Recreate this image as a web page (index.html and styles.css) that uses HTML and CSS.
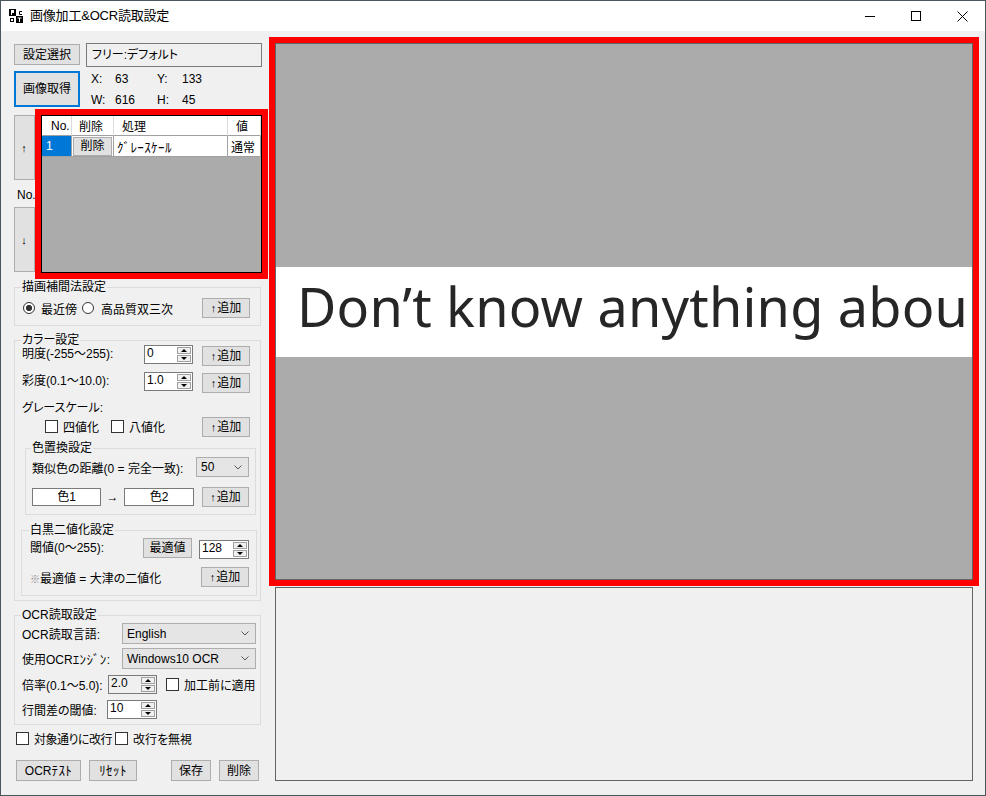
FILE: index.html
```html
<!DOCTYPE html>
<html lang="ja">
<head>
<meta charset="utf-8">
<title>画像加工&amp;OCR読取設定</title>
<link rel="stylesheet" href="styles.css">
</head>
<body>
<div class="window">
  <header class="titlebar">
    <svg class="app-icon" width="16" height="16" viewBox="0 0 16 16">
      <rect x="1" y="1" width="7" height="7" fill="#000"/>
      <rect x="3" y="2" width="3" height="3" fill="#fff"/>
      <rect x="3" y="5" width="1" height="2" fill="#fff"/>
      <path d="M14 3.5H11.5V6.5H14" fill="none" stroke="#000"/>
      <rect x="2.5" y="10.5" width="3" height="3" fill="none" stroke="#000"/>
      <rect x="8" y="8" width="7" height="7" fill="#000"/>
      <rect x="9.5" y="9.5" width="4" height="1" fill="#fff"/>
      <rect x="11" y="10" width="1" height="4" fill="#fff"/>
    </svg>
    <span class="title">画像加工&amp;OCR読取設定</span>
    <div class="caption">
      <span class="cap-btn"><svg width="10" height="10" viewBox="0 0 10 10"><path d="M0 5.5H10" stroke="#000"/></svg></span>
      <span class="cap-btn"><svg width="10" height="10" viewBox="0 0 10 10"><rect x="0.5" y="0.5" width="9" height="9" fill="none" stroke="#000"/></svg></span>
      <span class="cap-btn"><svg width="11" height="11" viewBox="0 0 11 11"><path d="M0.5 0.5L10.5 10.5M10.5 0.5L0.5 10.5" stroke="#000"/></svg></span>
    </div>
  </header>

  <main class="client">
    <section class="left">
      <div class="row-a">
        <button type="button" class="btn btn-select">設定選択</button>
        <div class="textbox ro-box">フリー:デフォルト</div>
      </div>

      <div class="row-b">
        <button type="button" class="btn btn-capture">画像取得</button>
        <div class="coords">
          <span>X:</span><span>63</span><span>Y:</span><span>133</span>
          <span>W:</span><span>616</span><span>H:</span><span>45</span>
        </div>
      </div>

      <div class="row-c">
        <div class="mover">
          <button type="button" class="btn btn-move"><span class="arr">↑</span></button>
          <span class="no-label">No.</span>
          <button type="button" class="btn btn-move"><span class="arr">↓</span></button>
        </div>
        <div class="grid">
          <div class="g-row g-head">
            <span class="g-cell c-no">No.</span>
            <span class="g-cell c-del">削除</span>
            <span class="g-cell c-proc">処理</span>
            <span class="g-cell c-val">値</span>
          </div>
          <div class="g-row g-data">
            <span class="g-cell c-no sel">1</span>
            <span class="g-cell c-del"><span class="btn cell-btn">削除</span></span>
            <span class="g-cell c-proc"><span class="hw">ｸﾞﾚｰｽｹｰﾙ</span></span>
            <span class="g-cell c-val">通常</span>
          </div>
        </div>
      </div>

      <fieldset class="group g-interp">
        <legend>描画補間法設定</legend>
        <div class="i-row">
          <span class="radio on"></span><span class="opt1">最近傍</span>
          <span class="radio r2"></span><span class="opt2">高品質双三次</span>
          <button type="button" class="btn btn-add"><span class="arr">↑</span>追加</button>
        </div>
      </fieldset>

      <fieldset class="group g-color">
        <legend>カラー設定</legend>
        <div class="frow">
          <span class="lbl">明度(-255～255):</span>
          <div class="num"><span class="num-val">0</span><span class="spin"><span class="sp"><i class="tri-up"></i></span><span class="sp"><i class="tri-down"></i></span></span></div>
          <button type="button" class="btn btn-add"><span class="arr">↑</span>追加</button>
        </div>
        <div class="frow mt6">
          <span class="lbl">彩度(0.1～10.0):</span>
          <div class="num"><span class="num-val">1.0</span><span class="spin"><span class="sp"><i class="tri-up"></i></span><span class="sp"><i class="tri-down"></i></span></span></div>
          <button type="button" class="btn btn-add"><span class="arr">↑</span>追加</button>
        </div>
        <div class="gs-label">グレースケール:</div>
        <div class="chk-row">
          <span class="chk first"></span><span class="chk-label">四値化</span>
          <span class="chk second"></span><span class="chk-label">八値化</span>
          <button type="button" class="btn btn-add"><span class="arr">↑</span>追加</button>
        </div>

        <fieldset class="group g-replace">
          <legend>色置換設定</legend>
          <div class="r-row1">
            <span>類似色の距離(0 = 完全一致):</span>
            <div class="combo c-dist"><span>50</span><svg class="chev" width="8" height="5" viewBox="0 0 8 5"><path d="M0.5 0.5L4 4L7.5 0.5" fill="none" stroke="#555"/></svg></div>
          </div>
          <div class="r-row2">
            <div class="textbox colorbox c1">色1</div>
            <span class="arrow">→</span>
            <div class="textbox colorbox c2">色2</div>
            <button type="button" class="btn btn-add w47"><span class="arr">↑</span>追加</button>
          </div>
        </fieldset>

        <fieldset class="group g-bw">
          <legend>白黒二値化設定</legend>
          <div class="b-row1">
            <span class="b-lbl">閾値(0～255):</span>
            <button type="button" class="btn btn-opt">最適値</button>
            <div class="num n128"><span class="num-val">128</span><span class="spin"><span class="sp"><i class="tri-up"></i></span><span class="sp"><i class="tri-down"></i></span></span></div>
          </div>
          <div class="b-row2">
            <span><span class="kome">※</span>最適値 = 大津の二値化</span>
            <button type="button" class="btn btn-add"><span class="arr">↑</span>追加</button>
          </div>
        </fieldset>
      </fieldset>

      <fieldset class="group g-ocr">
        <legend>OCR読取設定</legend>
        <div class="o-row o1">
          <span class="o-lbl">OCR読取言語:</span>
          <div class="combo c-wide"><span>English</span><svg class="chev" width="8" height="5" viewBox="0 0 8 5"><path d="M0.5 0.5L4 4L7.5 0.5" fill="none" stroke="#555"/></svg></div>
        </div>
        <div class="o-row o2">
          <span class="o-lbl">使用OCR<span class="hw">ｴﾝｼﾞﾝ</span>:</span>
          <div class="combo c-wide"><span>Windows10 OCR</span><svg class="chev" width="8" height="5" viewBox="0 0 8 5"><path d="M0.5 0.5L4 4L7.5 0.5" fill="none" stroke="#555"/></svg></div>
        </div>
        <div class="o-row o3">
          <span class="o-lbl w86">倍率(0.1～5.0):</span>
          <div class="num n-ro"><span class="num-val">2.0</span><span class="spin"><span class="sp"><i class="tri-up"></i></span><span class="sp"><i class="tri-down"></i></span></span></div>
          <span class="chk ocr-chk"></span><span class="chk-label">加工前に適用</span>
        </div>
        <div class="o-row o4">
          <span class="o-lbl w85">行間差の閾値:</span>
          <div class="num n50"><span class="num-val">10</span><span class="spin"><span class="sp"><i class="tri-up"></i></span><span class="sp"><i class="tri-down"></i></span></span></div>
        </div>
      </fieldset>

      <div class="nl-row">
        <span class="chk"></span><span class="chk-label nl1">対象通りに改行</span>
        <span class="chk"></span><span class="chk-label">改行を無視</span>
      </div>

      <div class="foot">
        <button type="button" class="btn b-test">OCR<span class="hw">ﾃｽﾄ</span></button>
        <button type="button" class="btn b-reset"><span class="hw">ﾘｾｯﾄ</span></button>
        <button type="button" class="btn b-save">保存</button>
        <button type="button" class="btn b-del">削除</button>
      </div>
    </section>

    <section class="right">
      <div class="picture">
        <div class="band">Don’t know anything abou</div>
      </div>
      <div class="lower"></div>
    </section>
  </main>
</div>
</body>
</html>
```

FILE: styles.css
```css
* { box-sizing: border-box; }
html, body { margin: 0; padding: 0; }
body {
  width: 986px;
  height: 796px;
  overflow: hidden;
  font-family: "Liberation Sans", "Noto Sans CJK JP", sans-serif;
  font-size: 12px;
  color: #000;
  font-feature-settings: "palt";
  background: #f0f0f0;
}
.hw { font-feature-settings: normal; font-size: 13px; letter-spacing: 0.4px; }
.window {
  width: 986px;
  height: 796px;
  border: 1px solid #4b555c;
  background: #f0f0f0;
  display: flex;
  flex-direction: column;
}

/* title bar */
.titlebar { flex: none; height: 30px; background: #fff; display: flex; align-items: center; }
.app-icon { flex: none; margin-left: 7px; margin-top: -1px; }
.title { margin-left: 6px; font-size: 13px; line-height: 16px; font-feature-settings: normal; letter-spacing: -0.2px; }
.caption { margin-left: auto; display: flex; height: 30px; }
.cap-btn { width: 46px; height: 30px; display: flex; align-items: center; justify-content: center; }

.client { flex: 1; display: flex; min-height: 0; }
.left { flex: none; width: 274px; padding-left: 13px; display: flex; flex-direction: column; }
.right { flex: none; width: 698px; padding-top: 12px; display: flex; flex-direction: column; }

/* generic controls */
.btn {
  flex: none;
  display: flex;
  align-items: center;
  justify-content: center;
  background: #e1e1e1;
  border: 1px solid #adadad;
  font: inherit;
  color: #000;
  padding: 0;
  margin: 0;
  line-height: 14px;
  white-space: nowrap;
}
.arr { font-family: "Liberation Sans", sans-serif; font-size: 11px; margin-right: 1px; }
.textbox { flex: none; border: 1px solid #7a7a7a; background: #fff; }
.chk { flex: none; width: 13px; height: 13px; border: 1px solid #333; background: #fff; }
.chk-label { margin-left: 5px; white-space: nowrap; }
.radio { flex: none; width: 12px; height: 12px; border: 1px solid #333; border-radius: 50%; background: #fff; }
.radio.on { background: radial-gradient(circle, #333 0 2.8px, #fff 3.4px); }

.num {
  flex: none;
  width: 49px;
  height: 19px;
  border: 1px solid #7a7a7a;
  background: #fff;
  display: flex;
}
.num-val { flex: 1; padding-left: 2px; line-height: 15px; }
.spin { flex: none; width: 14px; margin: 1px 1px 1px 0; display: flex; flex-direction: column; gap: 1px; }
.sp { flex: 1; display: flex; align-items: center; justify-content: center; background: #f0f0f0; border: 1px solid #a0a0a0; }
.tri-up { width: 0; height: 0; border-left: 3px solid transparent; border-right: 3px solid transparent; border-bottom: 3px solid #000; }
.tri-down { width: 0; height: 0; border-left: 3px solid transparent; border-right: 3px solid transparent; border-top: 3px solid #000; }

.combo {
  flex: none;
  display: flex;
  align-items: center;
  background: #e5e5e5;
  border: 1px solid #adadad;
  padding-left: 4px;
}
.chev { margin-left: auto; margin-right: 6px; }

/* row A / B */
.row-a { display: flex; margin-top: 12px; height: 24px; }
.btn-select { width: 66px; height: 21px; margin-top: 1px; }
.ro-box { width: 176px; height: 24px; margin-left: 6px; background: #f0f0f0; padding-left: 5px; line-height: 22px; }

.row-b { display: flex; margin-top: 4px; }
.btn-capture { width: 66px; height: 36px; border: 2px solid #0078d7; }
.coords {
  margin-left: 11px;
  margin-top: 1px;
  display: grid;
  grid-template-columns: 24px 42px 25px 30px;
  grid-auto-rows: 14px;
  row-gap: 7px;
  line-height: 14px;
}

/* row C : data grid */
.row-c { display: flex; margin-top: 8px; height: 158px; }
.mover { flex: none; width: 21px; display: flex; flex-direction: column; }
.btn-move { width: 21px; height: 65px; }
.no-label { height: 27px; padding: 3px 0 0 3px; display: flex; align-items: center; }
.grid {
  flex: none;
  margin-left: 6px;
  width: 221px;
  height: 158px;
  border: 1px solid #000;
  background: #ababab;
  outline: 6px solid #ff0000;
}
.g-row { display: flex; height: 21px; background: #fff; }
.g-head { height: 20px; }
.g-cell {
  flex: none;
  display: flex;
  align-items: center;
  border-right: 1px solid #a0a0a0;
  border-bottom: 1px solid #a0a0a0;
  white-space: nowrap;
  overflow: hidden;
}
.g-head .g-cell { border-right-color: #dcdcdc; }
.c-no { width: 30px; }
.c-del { width: 42px; }
.c-proc { width: 114px; }
.c-val { width: 33px; }
.g-head .c-no { padding-left: 9px; }
.g-head .c-del { padding-left: 7px; }
.g-head .c-proc { padding-left: 8px; }
.g-head .c-val { padding-left: 8px; }
.g-data .c-no { padding-left: 4px; }
.g-data .c-proc { padding-left: 3px; }
.g-data .c-val { padding-left: 3px; }
.sel { background: #0078d7; color: #fff; }
.cell-btn { width: 39px; height: 19px; margin-left: 1px; }

/* group boxes */
.group { margin: 0; padding: 0; border: 1px solid #dcdcdc; min-width: 0; flex: none; }
.group > legend { padding: 0 1px; line-height: 10px; font-size: 12px; white-space: nowrap; }

.g-interp { width: 247px; margin-top: 9px; }
.g-interp > legend { margin-left: 6px; }
.i-row { display: flex; align-items: center; height: 20px; margin: 6px 10px 7px 8px; }
.opt1 { margin-left: 6px; }
.r2 { margin-left: 5px; }
.opt2 { margin-left: 7px; }
.btn-add { width: 48px; height: 20px; margin-left: auto; }
.btn-add.w47 { width: 47px; }

.g-color { width: 247px; margin-top: 9px; padding-bottom: 4px; }
.g-color > legend { margin-left: 6px; }
.frow { display: flex; align-items: flex-start; height: 21px; margin: 0 10px 0 7px; }
.frow .lbl { width: 122px; line-height: 19px; white-space: nowrap; }
.frow .btn-add { margin-top: 1px; }
.mt6 { margin-top: 6px; }
.gs-label { line-height: 14px; margin: 8px 0 0 7px; }
.chk-row { display: flex; align-items: center; height: 21px; margin: 1px 10px 0 7px; }
.chk.first { margin-left: 23px; }
.chk.second { margin-left: 12px; }

.g-replace { width: 231px; margin: 6px 0 0 10px; padding-bottom: 7px; }
.g-replace > legend { margin-left: 5px; }
.r-row1 { display: flex; align-items: center; height: 20px; margin: 4px 6px 0 6px; white-space: nowrap; }
.c-dist { width: 53px; height: 20px; margin-left: auto; }
.r-row2 { display: flex; align-items: center; height: 20px; margin: 10px 6px 0 6px; }
.colorbox { height: 18px; line-height: 16px; text-align: center; }
.c1 { width: 69px; }
.c2 { width: 70px; }
.arrow { width: 23px; text-align: center; font-family: "Liberation Sans", sans-serif; }

.g-bw { width: 236px; margin: 10px 0 0 6px; padding-bottom: 8px; }
.g-bw > legend { margin-left: 7px; }
.b-row1 { display: flex; align-items: flex-start; height: 21px; margin: 3px 7px 0 8px; }
.b-lbl { width: 113px; line-height: 20px; white-space: nowrap; }
.btn-opt { width: 49px; height: 20px; }
.n128 { width: 50px; margin-left: 7px; margin-top: 2px; }
.b-row2 { display: flex; align-items: center; height: 20px; margin: 8px 7px 0 8px; white-space: nowrap; }
.kome { color: #888; font-size: 10px; }

.g-ocr { width: 247px; margin-top: 9px; padding-bottom: 5px; }
.g-ocr > legend { margin-left: 6px; }
.o-row { display: flex; align-items: center; margin: 0 4px 0 7px; white-space: nowrap; }
.o-lbl { width: 100px; }
.o-lbl.w86 { width: 86px; }
.o-lbl.w85 { width: 85px; }
.o1 { margin-top: 3px; height: 21px; }
.o2 { margin-top: 4px; height: 21px; }
.o3 { margin-top: 6px; height: 19px; }
.o4 { margin-top: 6px; height: 19px; }
.c-wide { width: 134px; height: 21px; }
.n-ro { background: #f0f0f0; }
.n50 { width: 50px; }
.ocr-chk { margin-left: 9px; }

.nl-row { display: flex; align-items: center; height: 13px; margin-top: 7px; padding-left: 2px; white-space: nowrap; }
.nl1 { margin-right: 3px; letter-spacing: -0.5px; }

.foot { display: flex; margin-top: 15px; padding-left: 2px; height: 21px; }
.foot .btn { height: 21px; }
.b-test { width: 65px; }
.b-reset { width: 48px; margin-left: 8px; }
.b-save { width: 40px; margin-left: 34px; }
.b-del { width: 40px; margin-left: 8px; }

/* right side */
.picture {
  flex: none;
  width: 698px;
  height: 537px;
  border: 1px solid #646464;
  background: #ababab;
  outline: 6px solid #ff0000;
  display: flex;
  align-items: center;
  overflow: hidden;
}
.band {
  flex: 1;
  min-width: 0;
  height: 90px;
  background: #fff;
  padding: 0 0 12px 21px;
  font-family: "Noto Sans", sans-serif;
  font-size: 54px;
  line-height: 78px;
  letter-spacing: 0.2px;
  color: #262626;
  white-space: nowrap;
  overflow: hidden;
  font-feature-settings: normal;
}
.lower { flex: none; width: 698px; height: 194px; margin-top: 7px; border: 1px solid #646464; }
```
